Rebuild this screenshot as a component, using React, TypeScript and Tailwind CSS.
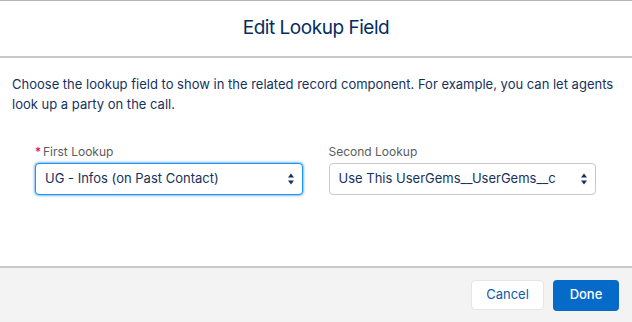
import React from "react";

const font = { fontFamily: "Inter, 'Noto Sans', sans-serif" };

function SelectArrows() {
  return (
    <svg width="8" height="16" viewBox="0 0 8 16" className="shrink-0">
      <path d="M4 2.5 L7 6.5 L1 6.5 Z" fill="#16325c" />
      <path d="M4 13.5 L7 9.5 L1 9.5 Z" fill="#16325c" />
    </svg>
  );
}

function LookupSelect({
  label,
  value,
  required,
  focused,
}: {
  label: string;
  value: string;
  required?: boolean;
  focused?: boolean;
}) {
  return (
    <div className="flex flex-col">
      <label className="flex items-center h-[16px] text-[12px] text-[#5c5c5c] mb-[3px]">
        {required && <span className="text-[#ea001e] mr-[2px]">*</span>}
        {label}
      </label>
      <div
        className={
          focused
            ? "flex items-center justify-between h-[32px] pl-[9px] pr-[7px] rounded-[4px] bg-white border border-[#1b96ff] shadow-[0_0_3px_#0176d3]"
            : "flex items-center justify-between h-[32px] pl-[9px] pr-[7px] rounded-[4px] bg-white border border-[#c9c9c9]"
        }
      >
        <span className="text-[13px] text-[#16325c] truncate">{value}</span>
        <SelectArrows />
      </div>
    </div>
  );
}

export default function App() {
  return (
    <div
      className="w-[632px] h-[322px] flex flex-col bg-white border-t border-[#aeb4bb] overflow-hidden"
      style={font}
    >
      <header className="h-[57px] flex items-center justify-center border-b-2 border-[#c9c9c9]">
        <h1 className="text-[19px] text-[#032d60] tracking-tight">Edit Lookup Field</h1>
      </header>

      <div className="flex-1">
        <p className="px-[12px] pt-[16px] text-[13px] leading-[20px] text-[#16325c]">
          Choose the lookup field to show in the related record component. For example, you can let agents
          look up a party on the call.
        </p>
        <div className="grid grid-cols-2 gap-[26px] pl-[35px] pr-[36px] mt-[30px]">
          <LookupSelect label="First Lookup" value="UG - Infos (on Past Contact)" required focused />
          <LookupSelect label="Second Lookup" value="Use This UserGems__UserGems__c" />
        </div>
      </div>

      <footer className="h-[56px] flex items-center justify-end gap-[9px] pr-[13px] bg-[#f3f3f3] border-t-2 border-[#c9c9c9]">
        <button className="h-[30px] w-[73px] rounded-[4px] bg-white border border-[#e5e5e5] text-[13px] text-[#0b5cab]">
          Cancel
        </button>
        <button className="h-[31px] w-[66px] rounded-[4px] bg-[#066ac9] text-[13px] font-medium text-white">
          Done
        </button>
      </footer>
    </div>
  );
}
